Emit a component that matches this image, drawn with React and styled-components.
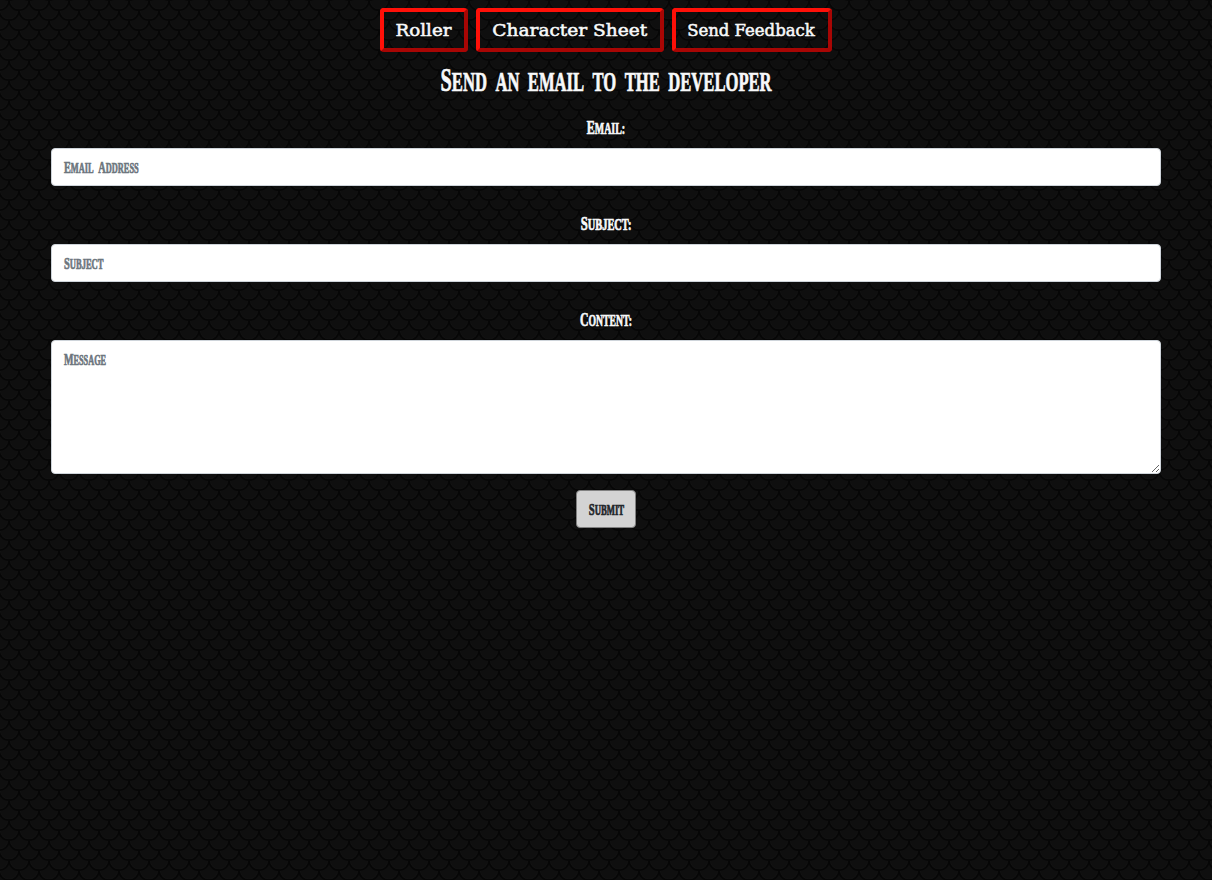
import React from "react";
import styled, { createGlobalStyle } from "styled-components";

const scales = encodeURIComponent(`<svg xmlns="http://www.w3.org/2000/svg" width="20" height="20">
<defs><radialGradient id="g"><stop offset="0" stop-color="#0f0f0f"/><stop offset=".8" stop-color="#0f0f0f"/><stop offset=".9" stop-color="#141414"/><stop offset="1" stop-color="#0b0b0b"/></radialGradient></defs>
<rect width="20" height="20" fill="#060606"/>
<g fill="url(#g)" stroke="#060606" stroke-width="1.8">
<circle cx="-1" cy="20.2" r="10"/><circle cx="19" cy="20.2" r="10"/>
<circle cx="9" cy="10.2" r="10"/><circle cx="29" cy="10.2" r="10"/>
<circle cx="-1" cy=".2" r="10"/><circle cx="19" cy=".2" r="10"/>
<circle cx="9" cy="-9.8" r="10"/><circle cx="29" cy="-9.8" r="10"/>
</g></svg>`);

const display = `"Liberation Serif", serif`;

const GlobalStyle = createGlobalStyle`
  *, *::before, *::after { box-sizing: border-box; }
  body {
    margin: 0;
    min-height: 100vh;
    background: #0d0d0d url("data:image/svg+xml,${scales}");
    color: #f8f9fa;
    font: 16px/24px ${display};
  }
`;

const Page = styled.div`
  display: flex;
  flex-direction: column;
  align-items: center;
  padding: 8px 51px 0;
`;

const Nav = styled.nav`
  display: flex;
  gap: 8px;
`;

const NavButton = styled.button`
  width: ${(p) => p.$width}px;
  height: 44px;
  padding: 2px 1px 0 0;
  border: 4px solid;
  border-color: #ff1008 #a80604 #a80604 #ff1008;
  border-radius: 4px;
  background: transparent;
  color: #f8f9fa;
  font: 16px/24px "DejaVu Serif", serif;
  white-space: nowrap;
  -webkit-text-stroke: 0.5px currentColor;
`;

const NavText = styled.span`
  display: inline-block;
  transform: scaleX(${(p) => p.$stretch});
`;

const Condensed = styled.span`
  display: inline-block;
  white-space: nowrap;
  text-transform: uppercase;
  transform: scaleX(${(p) => p.$squeeze});
  transform-origin: ${(p) => p.$origin || "center"} center;
  -webkit-text-stroke: 0.7px currentColor;
`;

const Word = styled.span`
  display: inline-block;
  &::first-letter {
    font-size: ${(p) => (p.$capital ? 1.22 : 1)}em;
    line-height: 1;
  }
`;

function Caps({ children, squeeze, origin }) {
  return (
    <Condensed $squeeze={squeeze} $origin={origin}>
      {children.split(" ").map((word, i) => (
        <React.Fragment key={i}>
          {i > 0 && " "}
          <Word $capital={word[0] !== word[0].toLowerCase()}>{word}</Word>
        </React.Fragment>
      ))}
    </Condensed>
  );
}

const Title = styled.h1`
  display: flex;
  justify-content: center;
  margin: 12px 0 0;
  width: 100%;
  height: 34px;
  font: 700 27px/32px ${display};
  word-spacing: 7px;
  -webkit-text-stroke: 1px currentColor;
`;

const Form = styled.form`
  display: flex;
  flex-direction: column;
  align-items: center;
  width: 100%;
`;

const Group = styled.div`
  display: flex;
  flex-direction: column;
  align-items: center;
  width: 100%;
  padding-top: ${(p) => p.$top}px;
`;

const Label = styled.label`
  height: 24px;
  margin-bottom: 8px;
  font: 700 16px/26px ${display};
`;

const Field = styled.div`
  position: relative;
  width: 100%;
`;

const Hint = styled.span`
  position: absolute;
  top: 9px;
  left: 12.5px;
  color: #6c757d;
  font: 700 14px/24px ${display};
  word-spacing: 4px;
  pointer-events: none;
`;

const fieldStyle = `
  display: block;
  width: 100%;
  margin: 0;
  padding: 6px 12px;
  border: 1px solid #ced4da;
  border-radius: 4px;
  background: #fff;
  color: #495057;
  font: 700 16px/24px ${display};
  font-variant: small-caps;
`;

const Input = styled.input`
  ${fieldStyle}
  height: 38px;
  &:not(:placeholder-shown) + ${Hint} { display: none; }
`;

const Message = styled.textarea`
  ${fieldStyle}
  height: 134px;
  resize: vertical;
  &:not(:placeholder-shown) + ${Hint} { display: none; }
`;

const Submit = styled.button`
  display: flex;
  justify-content: center;
  align-items: center;
  width: 60px;
  height: 38px;
  margin-top: 16px;
  padding: 3px 0 0;
  border: 1px solid #808080;
  border-radius: 4px;
  background: #d3d3d3;
  color: #212529;
  font: 700 14px/24px ${display};
`;

export default function App() {
  return (
    <>
      <GlobalStyle />
      <Page>
        <Nav>
          <NavButton $width={88}><NavText $stretch={1.14}>Roller</NavText></NavButton>
          <NavButton $width={187.5}><NavText $stretch={1.16}>Character Sheet</NavText></NavButton>
          <NavButton $width={160}><NavText $stretch={1.03}>Send Feedback</NavText></NavButton>
        </Nav>
        <Title><Caps squeeze={0.615}>Send an email to the developer</Caps></Title>
        <Form>
          <Group $top={18}>
            <Label htmlFor="email"><Caps squeeze={0.62}>Email:</Caps></Label>
            <Field>
              <Input id="email" placeholder=" " />
              <Hint><Caps squeeze={0.6} origin="left">Email Address</Caps></Hint>
            </Field>
          </Group>
          <Group $top={26}>
            <Label htmlFor="subject"><Caps squeeze={0.65}>Subject:</Caps></Label>
            <Field>
              <Input id="subject" placeholder=" " />
              <Hint><Caps squeeze={0.61} origin="left">Subject</Caps></Hint>
            </Field>
          </Group>
          <Group $top={26}>
            <Label htmlFor="content"><Caps squeeze={0.605}>Content:</Caps></Label>
            <Field>
              <Message id="content" placeholder=" " />
              <Hint><Caps squeeze={0.59} origin="left">Message</Caps></Hint>
            </Field>
          </Group>
          <Submit type="button"><Caps squeeze={0.62}>Submit</Caps></Submit>
        </Form>
      </Page>
    </>
  );
}
